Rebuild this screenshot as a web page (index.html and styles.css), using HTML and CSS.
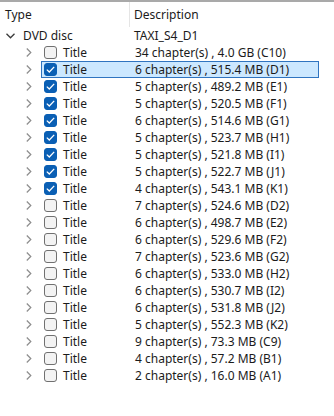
FILE: index.html
```html
<!DOCTYPE html>
<html lang="en">
<head>
    <meta charset="UTF-8">
    <meta name="viewport" content="width=device-width, initial-scale=1.0">
    <title>Titles</title>
    <link rel="stylesheet" href="styles.css">
</head>
<body>
    <div class="tree">
        <div class="header">
            <div class="col-type">Type</div>
            <div class="col-desc">Description</div>
        </div>

        <div class="row disc">
            <span class="twisty">
                <svg width="9" height="6" viewBox="0 0 9 6"><path d="M0.5 0.8 L4.5 4.8 L8.5 0.8" fill="none" stroke="#3a3a3a" stroke-width="1.3"/></svg>
            </span>
            <span class="name">DVD disc</span>
            <span class="desc">TAXI_S4_D1</span>
        </div>

        <div id="titles"></div>
    </div>

    <script>
        const titles = [
            ["34 chapter(s) , 4.0 GB (C10)", false],
            ["6 chapter(s) , 515.4 MB (D1)", true, true],
            ["5 chapter(s) , 489.2 MB (E1)", true],
            ["5 chapter(s) , 520.5 MB (F1)", true],
            ["6 chapter(s) , 514.6 MB (G1)", true],
            ["5 chapter(s) , 523.7 MB (H1)", true],
            ["5 chapter(s) , 521.8 MB (I1)", true],
            ["5 chapter(s) , 522.7 MB (J1)", true],
            ["4 chapter(s) , 543.1 MB (K1)", true],
            ["7 chapter(s) , 524.6 MB (D2)", false],
            ["6 chapter(s) , 498.7 MB (E2)", false],
            ["6 chapter(s) , 529.6 MB (F2)", false],
            ["7 chapter(s) , 523.6 MB (G2)", false],
            ["6 chapter(s) , 533.0 MB (H2)", false],
            ["6 chapter(s) , 530.7 MB (I2)", false],
            ["6 chapter(s) , 531.8 MB (J2)", false],
            ["5 chapter(s) , 552.3 MB (K2)", false],
            ["9 chapter(s) , 73.3 MB (C9)", false],
            ["4 chapter(s) , 57.2 MB (B1)", false],
            ["2 chapter(s) , 16.0 MB (A1)", false]
        ];

        const chevron = '<svg width="6" height="9" viewBox="0 0 6 9"><path d="M0.8 0.5 L4.8 4.5 L0.8 8.5" fill="none" stroke="#8c8c8c" stroke-width="1.2"/></svg>';
        const tick = '<svg width="9" height="7" viewBox="0 0 9 7"><path d="M0.8 3.6 L3.3 6 L8.2 0.9" fill="none" stroke="#fff" stroke-width="1.3"/></svg>';

        const list = document.getElementById("titles");
        for (const [desc, checked, selected] of titles) {
            const row = document.createElement("div");
            row.className = "row title";
            row.innerHTML =
                `<span class="twisty">${chevron}</span>` +
                `<div class="item${selected ? " selected" : ""}">` +
                `<span class="check${checked ? " on" : ""}">${checked ? tick : ""}</span>` +
                `<span class="name">Title</span>` +
                `<span class="desc">${desc}</span>` +
                `</div>`;
            list.appendChild(row);
        }
    </script>
</body>
</html>
```

FILE: styles.css
```css
body {
    margin: 0;
    background: #fff;
    font-family: "Noto Sans", sans-serif;
    font-size: 12px;
    color: #1b1b1b;
}
.tree {
    width: 334px;
    height: 416px;
    border-top: 2px solid #a9a9a9;
    box-sizing: border-box;
}
.header {
    display: flex;
    height: 25px;
    align-items: center;
}
.col-type {
    width: 124px;
    height: 100%;
    display: flex;
    align-items: center;
    padding-left: 5px;
    border-right: 1px solid #e5e5e5;
}
.col-desc {
    padding-left: 4px;
}
.row {
    display: flex;
    align-items: center;
    height: 17px;
}
.twisty {
    display: flex;
    align-items: center;
    justify-content: center;
}
.disc .twisty {
    width: 9px;
    margin: 0 8px 0 6px;
}
.disc .name {
    width: 111px;
}
.title .twisty {
    width: 6px;
    margin: 0 9px 0 26px;
}
.item {
    display: flex;
    align-items: center;
    width: 278px;
    height: 17px;
    box-sizing: border-box;
    border: 1px solid transparent;
}
.item.selected {
    background: #cce8ff;
    border-color: #2f74c0;
}
.check {
    width: 13px;
    height: 13px;
    box-sizing: border-box;
    margin: 0 6px 0 2px;
    border: 1px solid #707070;
    border-radius: 3px;
    background: #f3f3f3;
    display: flex;
    align-items: center;
    justify-content: center;
}
.check.on {
    background: #0a5fb4;
    border-color: #0a5fb4;
}
.title .name {
    width: 72px;
}
.desc {
    white-space: nowrap;
}
```
